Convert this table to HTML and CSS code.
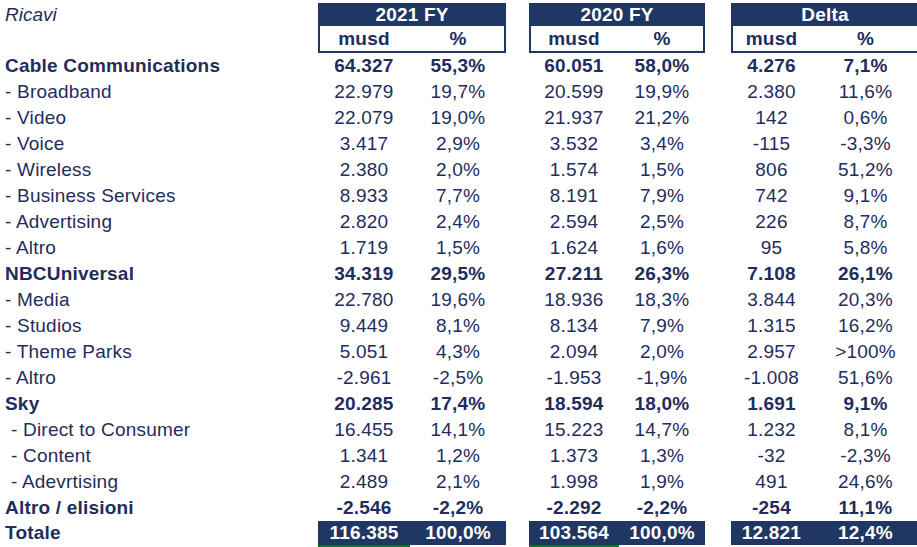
FILE: index.html
```html
<!DOCTYPE html>
<html lang="it">
<head>
<meta charset="utf-8">
<title>Ricavi</title>
<link rel="stylesheet" href="styles.css">
</head>
<body>
<div class="sheet">
  <div class="row head">
    <div class="label title">Ricavi</div>
    <div class="grp g1 dark">2021 FY</div>
    <div class="grp g2 dark">2020 FY</div>
    <div class="grp g3 dark">Delta</div>
  </div>
  <div class="row sub">
    <div class="label"></div>
    <div class="grp g1 box"><div class="c a">musd</div><div class="c b">%</div></div>
    <div class="grp g2 box"><div class="c a">musd</div><div class="c b">%</div></div>
    <div class="grp g3 box"><div class="c a">musd</div><div class="c b">%</div></div>
  </div>

  <div class="row data bold">
    <div class="label">Cable Communications</div>
    <div class="grp g1"><div class="c a">64.327</div><div class="c b">55,3%</div></div>
    <div class="grp g2"><div class="c a">60.051</div><div class="c b">58,0%</div></div>
    <div class="grp g3"><div class="c a">4.276</div><div class="c b">7,1%</div></div>
  </div>
  <div class="row data">
    <div class="label">- Broadband</div>
    <div class="grp g1"><div class="c a">22.979</div><div class="c b">19,7%</div></div>
    <div class="grp g2"><div class="c a">20.599</div><div class="c b">19,9%</div></div>
    <div class="grp g3"><div class="c a">2.380</div><div class="c b">11,6%</div></div>
  </div>
  <div class="row data">
    <div class="label">- Video</div>
    <div class="grp g1"><div class="c a">22.079</div><div class="c b">19,0%</div></div>
    <div class="grp g2"><div class="c a">21.937</div><div class="c b">21,2%</div></div>
    <div class="grp g3"><div class="c a">142</div><div class="c b">0,6%</div></div>
  </div>
  <div class="row data">
    <div class="label">- Voice</div>
    <div class="grp g1"><div class="c a">3.417</div><div class="c b">2,9%</div></div>
    <div class="grp g2"><div class="c a">3.532</div><div class="c b">3,4%</div></div>
    <div class="grp g3"><div class="c a">-115</div><div class="c b">-3,3%</div></div>
  </div>
  <div class="row data">
    <div class="label">- Wireless</div>
    <div class="grp g1"><div class="c a">2.380</div><div class="c b">2,0%</div></div>
    <div class="grp g2"><div class="c a">1.574</div><div class="c b">1,5%</div></div>
    <div class="grp g3"><div class="c a">806</div><div class="c b">51,2%</div></div>
  </div>
  <div class="row data">
    <div class="label">- Business Services</div>
    <div class="grp g1"><div class="c a">8.933</div><div class="c b">7,7%</div></div>
    <div class="grp g2"><div class="c a">8.191</div><div class="c b">7,9%</div></div>
    <div class="grp g3"><div class="c a">742</div><div class="c b">9,1%</div></div>
  </div>
  <div class="row data">
    <div class="label">- Advertising</div>
    <div class="grp g1"><div class="c a">2.820</div><div class="c b">2,4%</div></div>
    <div class="grp g2"><div class="c a">2.594</div><div class="c b">2,5%</div></div>
    <div class="grp g3"><div class="c a">226</div><div class="c b">8,7%</div></div>
  </div>
  <div class="row data">
    <div class="label">- Altro</div>
    <div class="grp g1"><div class="c a">1.719</div><div class="c b">1,5%</div></div>
    <div class="grp g2"><div class="c a">1.624</div><div class="c b">1,6%</div></div>
    <div class="grp g3"><div class="c a">95</div><div class="c b">5,8%</div></div>
  </div>

  <div class="row data bold">
    <div class="label">NBCUniversal</div>
    <div class="grp g1"><div class="c a">34.319</div><div class="c b">29,5%</div></div>
    <div class="grp g2"><div class="c a">27.211</div><div class="c b">26,3%</div></div>
    <div class="grp g3"><div class="c a">7.108</div><div class="c b">26,1%</div></div>
  </div>
  <div class="row data">
    <div class="label">- Media</div>
    <div class="grp g1"><div class="c a">22.780</div><div class="c b">19,6%</div></div>
    <div class="grp g2"><div class="c a">18.936</div><div class="c b">18,3%</div></div>
    <div class="grp g3"><div class="c a">3.844</div><div class="c b">20,3%</div></div>
  </div>
  <div class="row data">
    <div class="label">- Studios</div>
    <div class="grp g1"><div class="c a">9.449</div><div class="c b">8,1%</div></div>
    <div class="grp g2"><div class="c a">8.134</div><div class="c b">7,9%</div></div>
    <div class="grp g3"><div class="c a">1.315</div><div class="c b">16,2%</div></div>
  </div>
  <div class="row data">
    <div class="label">- Theme Parks</div>
    <div class="grp g1"><div class="c a">5.051</div><div class="c b">4,3%</div></div>
    <div class="grp g2"><div class="c a">2.094</div><div class="c b">2,0%</div></div>
    <div class="grp g3"><div class="c a">2.957</div><div class="c b">&gt;100%</div></div>
  </div>
  <div class="row data">
    <div class="label">- Altro</div>
    <div class="grp g1"><div class="c a">-2.961</div><div class="c b">-2,5%</div></div>
    <div class="grp g2"><div class="c a">-1.953</div><div class="c b">-1,9%</div></div>
    <div class="grp g3"><div class="c a">-1.008</div><div class="c b">51,6%</div></div>
  </div>

  <div class="row data bold">
    <div class="label">Sky</div>
    <div class="grp g1"><div class="c a">20.285</div><div class="c b">17,4%</div></div>
    <div class="grp g2"><div class="c a">18.594</div><div class="c b">18,0%</div></div>
    <div class="grp g3"><div class="c a">1.691</div><div class="c b">9,1%</div></div>
  </div>
  <div class="row data">
    <div class="label indent">- Direct to Consumer</div>
    <div class="grp g1"><div class="c a">16.455</div><div class="c b">14,1%</div></div>
    <div class="grp g2"><div class="c a">15.223</div><div class="c b">14,7%</div></div>
    <div class="grp g3"><div class="c a">1.232</div><div class="c b">8,1%</div></div>
  </div>
  <div class="row data">
    <div class="label indent">- Content</div>
    <div class="grp g1"><div class="c a">1.341</div><div class="c b">1,2%</div></div>
    <div class="grp g2"><div class="c a">1.373</div><div class="c b">1,3%</div></div>
    <div class="grp g3"><div class="c a">-32</div><div class="c b">-2,3%</div></div>
  </div>
  <div class="row data">
    <div class="label indent">- Adevrtising</div>
    <div class="grp g1"><div class="c a">2.489</div><div class="c b">2,1%</div></div>
    <div class="grp g2"><div class="c a">1.998</div><div class="c b">1,9%</div></div>
    <div class="grp g3"><div class="c a">491</div><div class="c b">24,6%</div></div>
  </div>

  <div class="row data bold">
    <div class="label">Altro / elisioni</div>
    <div class="grp g1"><div class="c a">-2.546</div><div class="c b">-2,2%</div></div>
    <div class="grp g2"><div class="c a">-2.292</div><div class="c b">-2,2%</div></div>
    <div class="grp g3"><div class="c a">-254</div><div class="c b">11,1%</div></div>
  </div>

  <div class="row total bold">
    <div class="label">Totale</div>
    <div class="grp g1"><div class="c a dark ul">116.385</div><div class="c b dark">100,0%</div></div>
    <div class="grp g2"><div class="c a dark ul">103.564</div><div class="c b dark">100,0%</div></div>
    <div class="grp g3"><div class="c a dark">12.821</div><div class="c b dark">12,4%</div></div>
  </div>
</div>
</body>
</html>
```

FILE: styles.css
```css
html, body {
  margin: 0;
  padding: 0;
  background: #ffffff;
  overflow: hidden;
}

.sheet {
  width: 920px;
  font-family: "Liberation Sans", Arial, sans-serif;
  font-size: 19px;
  letter-spacing: 0.2px;
  color: #1f2d5c;
}

.row {
  display: flex;
  align-items: stretch;
}

.label {
  width: 318px;
  flex: none;
  padding-left: 5px;
  box-sizing: border-box;
  white-space: nowrap;
}

.label.indent {
  padding-left: 11px;
}

.grp {
  display: flex;
  flex: none;
  box-sizing: border-box;
}

.g1 { width: 188px; }
.g2 { width: 176px; margin-left: 23px; }
.g3 { width: 188px; margin-left: 26px; }

.g1 .a { width: 92px; }
.g1 .b { width: 96px; }
.g2 .a { width: 90px; }
.g2 .b { width: 86px; }
.g3 .a { width: 81px; }
.g3 .b { width: 107px; }

.c {
  flex: none;
  text-align: center;
  white-space: nowrap;
  box-sizing: border-box;
}

.dark {
  background: #213763;
  color: #ffffff;
  font-weight: bold;
}

/* header row */
.head {
  margin-top: 3px;
  height: 23px;
  line-height: 23px;
}

.head .grp {
  justify-content: center;
}

.title {
  font-style: italic;
  letter-spacing: 0;
}

/* subheader row */
.sub {
  height: 27px;
  line-height: 25px;
  font-weight: bold;
}

.box {
  border: 2px solid #213763;
  border-top: none;
  background: #ffffff;
}

.box .a { margin-left: -2px; }

/* data rows */
.data {
  height: 26px;
  line-height: 26px;
}

.bold {
  font-weight: bold;
}

.total {
  height: 26px;
  line-height: 24px;
}

.total .c {
  height: 26px;
  border-bottom: 2px solid #ffffff;
}

.total .c.ul {
  border-bottom-color: #0b7a0b;
}
```
